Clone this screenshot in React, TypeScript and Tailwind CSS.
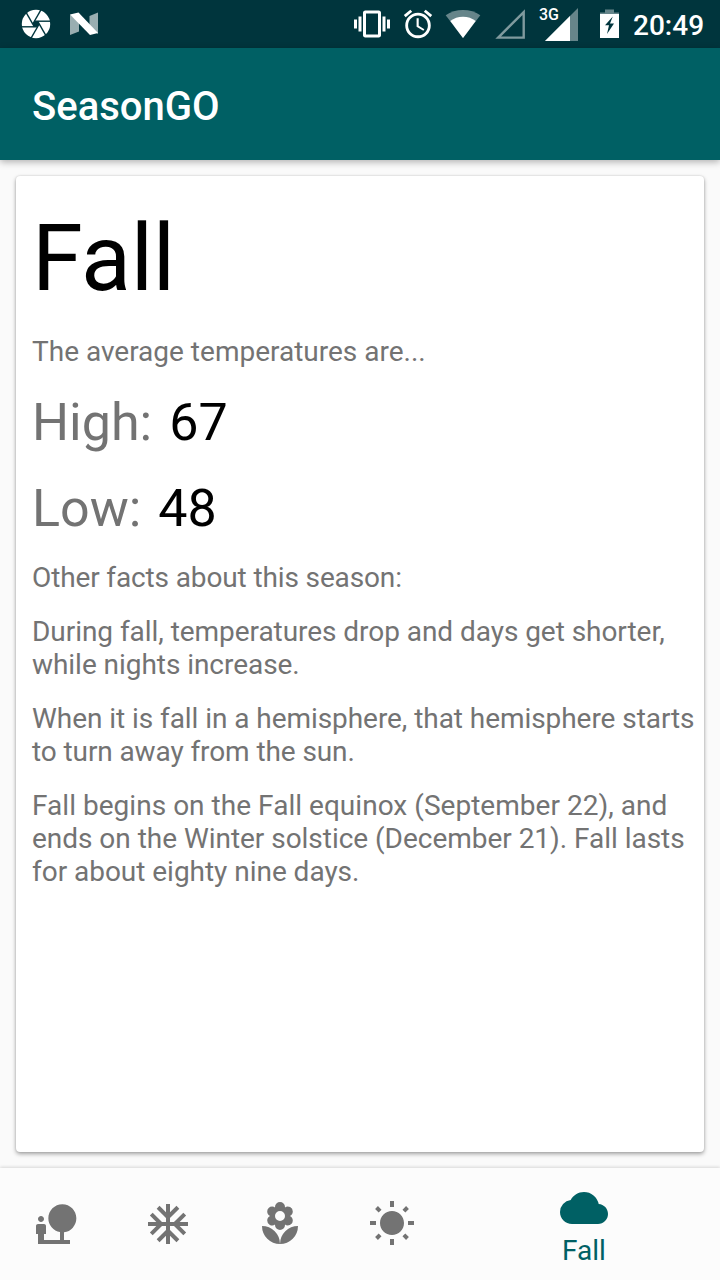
import type { ReactNode } from "react";
import {
  MdAcUnit,
  MdAlarm,
  MdCloud,
  MdLocalFlorist,
  MdNaturePeople,
  MdVibration,
  MdWbSunny,
} from "react-icons/md";

const BLADE_ANGLES = [0, 60, 120, 180, 240, 300];

function ApertureIcon() {
  return (
    <svg width="30" height="30" viewBox="-15 -15 30 30">
      <circle r="14.200" fill="#fff" />
      <polygon points="-1.6,-2.800 1.600,-2.800 3.200,0 1.600,2.800 -1.600,2.800 -3.200,0" fill="#00353d" />
      {BLADE_ANGLES.map((angle) => (
        <path key={angle} d="M-1.600-2.800H15" transform={`rotate(${angle})`} stroke="#00353d" strokeWidth="1.400" />
      ))}
    </svg>
  );
}

function NougatIcon() {
  return (
    <svg width="28" height="24" viewBox="0 0 28 24" fill="#fff">
      <path d="M0 2.5 9 9v10.500L0 23z" opacity=".6" />
      <path d="M19.500 4 28 .5V22l-8.500-6z" opacity=".6" />
      <path d="M0 2.500 8.500.5 28 21l-8 2z" />
    </svg>
  );
}

function WifiIcon() {
  return (
    <svg width="36" height="30" viewBox="0 0 36 30" fill="#fff">
      <path d="M18 29 .7 6.300C5.500 2.800 11.500 1 18 1s12.500 1.800 17.300 5.300z" opacity=".4" />
      <path d="M18 29 5.300 12C8.800 9.300 13.300 7.800 18 7.800S27.200 9.300 30.700 12z" />
    </svg>
  );
}

function EmptySignalIcon() {
  return (
    <svg width="30" height="32" viewBox="0 0 30 32" fill="none">
      <path d="M3.200 29.600H28.700V4.100z" stroke="#7f9a9e" strokeWidth="2.400" />
    </svg>
  );
}

function SignalIcon() {
  return (
    <svg width="34" height="34" viewBox="0 0 34 34" fill="#fff">
      <path d="M0 33 33 0v33z" opacity=".4" />
      <path d="M0 33 25 8v25z" />
    </svg>
  );
}

function BatteryIcon() {
  return (
    <svg width="19" height="30" viewBox="0 0 19 30" fill="#fff">
      <path d="M5 .5h9v3h5V5H0V3.500h5z" opacity=".4" />
      <path fillRule="evenodd" d="M0 5h19v24H0zM12.800 7.500 5 16.300h4L7 25l7-10.500h-4z" />
    </svg>
  );
}

function StatusBar() {
  return (
    <div className="flex h-12 shrink-0 items-center bg-[#00353d] text-white">
      <div className="ml-[21px]"><ApertureIcon /></div>
      <div className="ml-[19px]"><NougatIcon /></div>
      <div className="flex-1" />
      <MdVibration className="size-9" />
      <MdAlarm className="ml-[11px] size-[34px]" />
      <div className="ml-[10px]"><WifiIcon /></div>
      <div className="ml-[14px]"><EmptySignalIcon /></div>
      <div className="relative ml-[20px] pt-[2px]">
        <SignalIcon />
        <span className="absolute -left-[6px] top-[1px] text-[16px] font-medium leading-none">3G</span>
      </div>
      <div className="ml-[21px]"><BatteryIcon /></div>
      <span className="ml-[14px] mr-4 w-[71px] whitespace-nowrap pt-[3px] text-[28px] font-medium leading-none">20:49</span>
    </div>
  );
}

function Reading({ label, value }: { label: string; value: number }) {
  return (
    <div className="flex h-[61px] items-center gap-[17px] text-[52px] leading-[61px]">
      <span>{label}</span>
      <span className="text-black">{value}</span>
    </div>
  );
}

function NavItem({ children }: { children: ReactNode }) {
  return <button className="flex w-28 items-center justify-center text-5xl text-[#737373]">{children}</button>;
}

export default function App() {
  return (
    <div className="flex h-[1280px] w-[720px] flex-col overflow-hidden bg-[#fafafa] font-[Roboto,sans-serif]">
      <StatusBar />
      <header className="z-10 flex h-28 shrink-0 items-center bg-[#006064] px-8 pt-[6px] text-[40px] font-medium text-white shadow-[0_2px_7px_rgba(0,0,0,0.3)]">
        SeasonGO
      </header>
      <main className="flex-1 p-4">
        <article className="h-[976px] rounded-[4px] bg-white pl-4 pt-[30px] text-[28px] leading-[33px] text-[#737373] shadow-[0_2px_4px_rgba(0,0,0,0.35),0_0_2px_rgba(0,0,0,0.15)]">
          <h1 className="h-[106px] text-[92px] leading-[106px] tracking-[-0.3px] text-black">Fall</h1>
          <p className="mt-[23px]">The average temperatures are...</p>
          <div className="mt-6 flex flex-col gap-[25px]">
            <Reading label="High:" value={67} />
            <Reading label="Low:" value={48} />
          </div>
          <div className="mt-[22px] flex flex-col gap-[21px]">
            <p className="tracking-[-0.13px]">Other facts about this season:</p>
            <p className="tracking-[-0.05px]">During fall, temperatures drop and days get shorter,<br />while nights increase.</p>
            <p className="tracking-[-0.06px]">
              When it is fall in a hemisphere, that hemisphere starts<br />
              <span className="tracking-[-0.1px]">to turn away from the sun.</span>
            </p>
            <p className="tracking-[-0.03px]">
              <span className="tracking-[0.03px]">Fall begins on the Fall equinox (September 22), and</span><br />
              ends on the Winter solstice (December 21). Fall lasts<br />for about eighty nine days.
            </p>
          </div>
        </article>
      </main>
      <nav className="flex h-28 shrink-0 bg-[#fcfcfc] shadow-[0_-1px_3px_rgba(0,0,0,0.14)]">
        <NavItem><MdNaturePeople /></NavItem>
        <NavItem><MdAcUnit /></NavItem>
        <NavItem><MdLocalFlorist /></NavItem>
        <NavItem><MdWbSunny /></NavItem>
        <button className="flex flex-1 flex-col items-center pt-4 text-[28px] leading-[33px] text-[#006064]">
          <MdCloud className="size-12" />
          <span className="mt-[2px]">Fall</span>
        </button>
      </nav>
    </div>
  );
}
